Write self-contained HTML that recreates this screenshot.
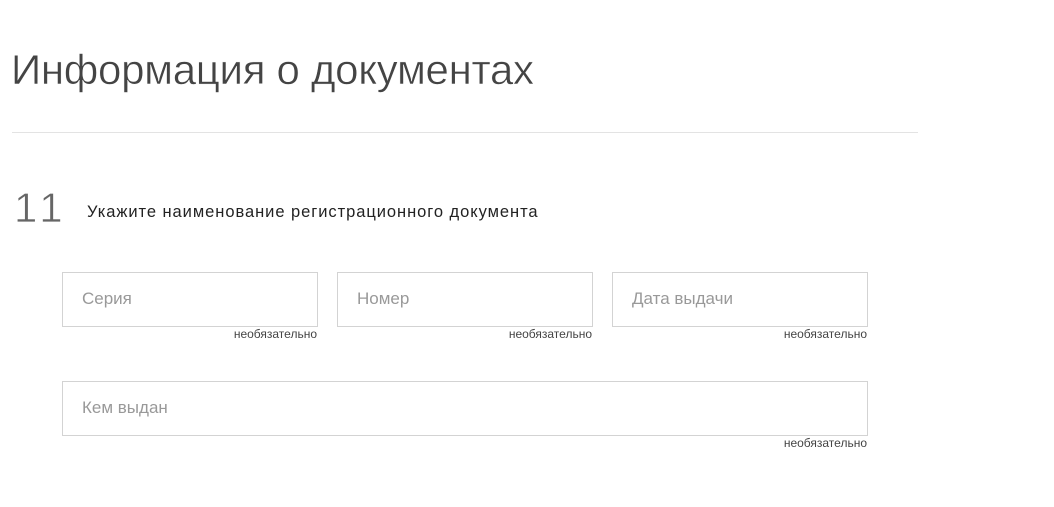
<!DOCTYPE html>
<html><head><meta charset="utf-8"><style>
body{margin:0;width:1054px;height:507px;background:#fff;font-family:"Liberation Sans",sans-serif;position:relative;overflow:hidden}
.a{position:absolute;white-space:nowrap}
.t{left:11px;top:46px;font-size:42px;color:#444;letter-spacing:-0.3px;-webkit-text-stroke:0.5px #fff}
.hr{left:12px;top:132px;width:906px;height:1px;background:#e3e3e3}
.n{left:14px;top:184px;font-size:42px;color:#666;letter-spacing:5px;-webkit-text-stroke:0.7px #fff}
.s{left:87px;top:203px;font-size:16.5px;color:#222;letter-spacing:0.95px}
.i{position:absolute;border:1px solid #d3d3d3;box-sizing:border-box;height:55px}
.i span{position:absolute;left:19px;top:16px;font-size:17px;color:#999}
.o{font-size:12px;color:#444}
</style></head><body>
<div class="a t">Информация о документах</div>
<div class="a hr"></div>
<div class="a n">11</div>
<div class="a s">Укажите наименование регистрационного документа</div>
<div class="i" style="left:62px;top:272px;width:256px"><span>Серия</span></div>
<div class="i" style="left:337px;top:272px;width:256px"><span>Номер</span></div>
<div class="i" style="left:612px;top:272px;width:256px"><span>Дата выдачи</span></div>
<div class="a o" style="right:737px;top:327px">необязательно</div>
<div class="a o" style="right:462px;top:327px">необязательно</div>
<div class="a o" style="right:187px;top:327px">необязательно</div>
<div class="i" style="left:62px;top:381px;width:806px"><span>Кем выдан</span></div>
<div class="a o" style="right:187px;top:436px">необязательно</div>
</body></html>
